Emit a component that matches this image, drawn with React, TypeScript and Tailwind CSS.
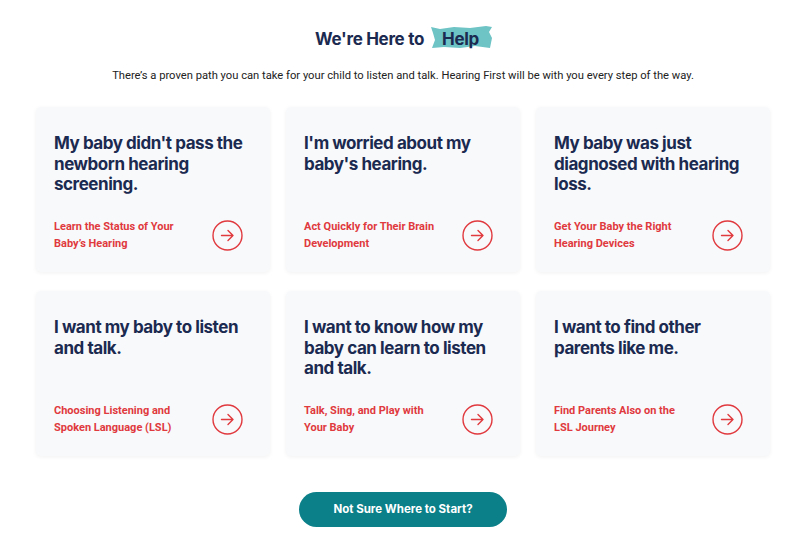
import React from "react";

const cards = [
  { title: "My baby didn't pass the newborn hearing screening.", link: ["Learn the Status of Your", "Baby’s Hearing"] },
  { title: "I'm worried about my baby's hearing.", link: ["Act Quickly for Their Brain", "Development"] },
  { title: "My baby was just diagnosed with hearing loss.", link: ["Get Your Baby the Right", "Hearing Devices"] },
  { title: "I want my baby to listen and talk.", link: ["Choosing Listening and", "Spoken Language (LSL)"] },
  { title: "I want to know how my baby can learn to listen and talk.", link: ["Talk, Sing, and Play with", "Your Baby"] },
  { title: "I want to find other parents like me.", link: ["Find Parents Also on the", "LSL Journey"] },
];

function Arrow() {
  return (
    <svg width="31" height="31" viewBox="0 0 31 31" fill="none">
      <circle cx="15.5" cy="15.5" r="14.5" stroke="#e0393e" strokeWidth="1.4" />
      <path d="M9.5 15.5h11.5M16 10.5l5 5-5 5" stroke="#e0393e" strokeWidth="1.4" strokeLinecap="round" strokeLinejoin="round" />
    </svg>
  );
}

export default function App() {
  return (
    <div className="w-[800px] h-[552px] bg-white flex flex-col items-center pt-[27px] pl-[6px]" style={{ fontFamily: "Roboto, sans-serif" }}>
      <h2 className="text-[17px] leading-[24px] font-bold text-[#1b2a50] flex items-center tracking-[-0.3px]" style={{ fontFamily: "Inter, sans-serif" }}>
        <span>We're Here to</span>
        <span className="relative ml-[6px] px-[12px]">
          <svg className="absolute left-0 top-[-1px]" width="63" height="23" viewBox="0 0 63 23">
            <polygon points="1,1 10,3 24,1 40,2 56,0 62,1 59,6 62,12 60,22 45,20 30,22 14,21 2,22 5,14 3,7" fill="#6ec3c5" />
          </svg>
          <span className="relative">Help</span>
        </span>
      </h2>
      <p className="mt-[16px] text-[11.2px] leading-[18px] text-[#222]">
        There’s a proven path you can take for your child to listen and talk. Hearing First will be with you every step of the way.
      </p>
      <div className="mt-[22px] grid grid-cols-[234px_234px_234px] gap-x-[16px] gap-y-[19px]">
        {cards.map((c, i) => (
          <div key={i} className="h-[165px] bg-[#f8f9fb] rounded-[5px] shadow-[0_1px_4px_rgba(0,0,0,0.06)] flex flex-col justify-between pl-[18px] pr-[27px] pt-[26px] pb-[20px]">
            <div className="w-[198px] text-[17px] leading-[20.5px] font-bold text-[#1b2a50] tracking-[-0.45px]" style={{ fontFamily: "Inter, sans-serif" }}>
              {c.title}
            </div>
            <div className="flex items-center justify-between">
              <div className="text-[11px] leading-[17px] font-bold text-[#e0393e]">
                <div>{c.link[0]}</div>
                <div>{c.link[1]}</div>
              </div>
              <Arrow />
            </div>
          </div>
        ))}
      </div>
      <button className="mt-[36px] w-[208px] h-[35px] rounded-full bg-[#0b8089] text-white text-[11.5px] font-bold" style={{ fontFamily: "Inter, sans-serif" }}>
        Not Sure Where to Start?
      </button>
    </div>
  );
}
